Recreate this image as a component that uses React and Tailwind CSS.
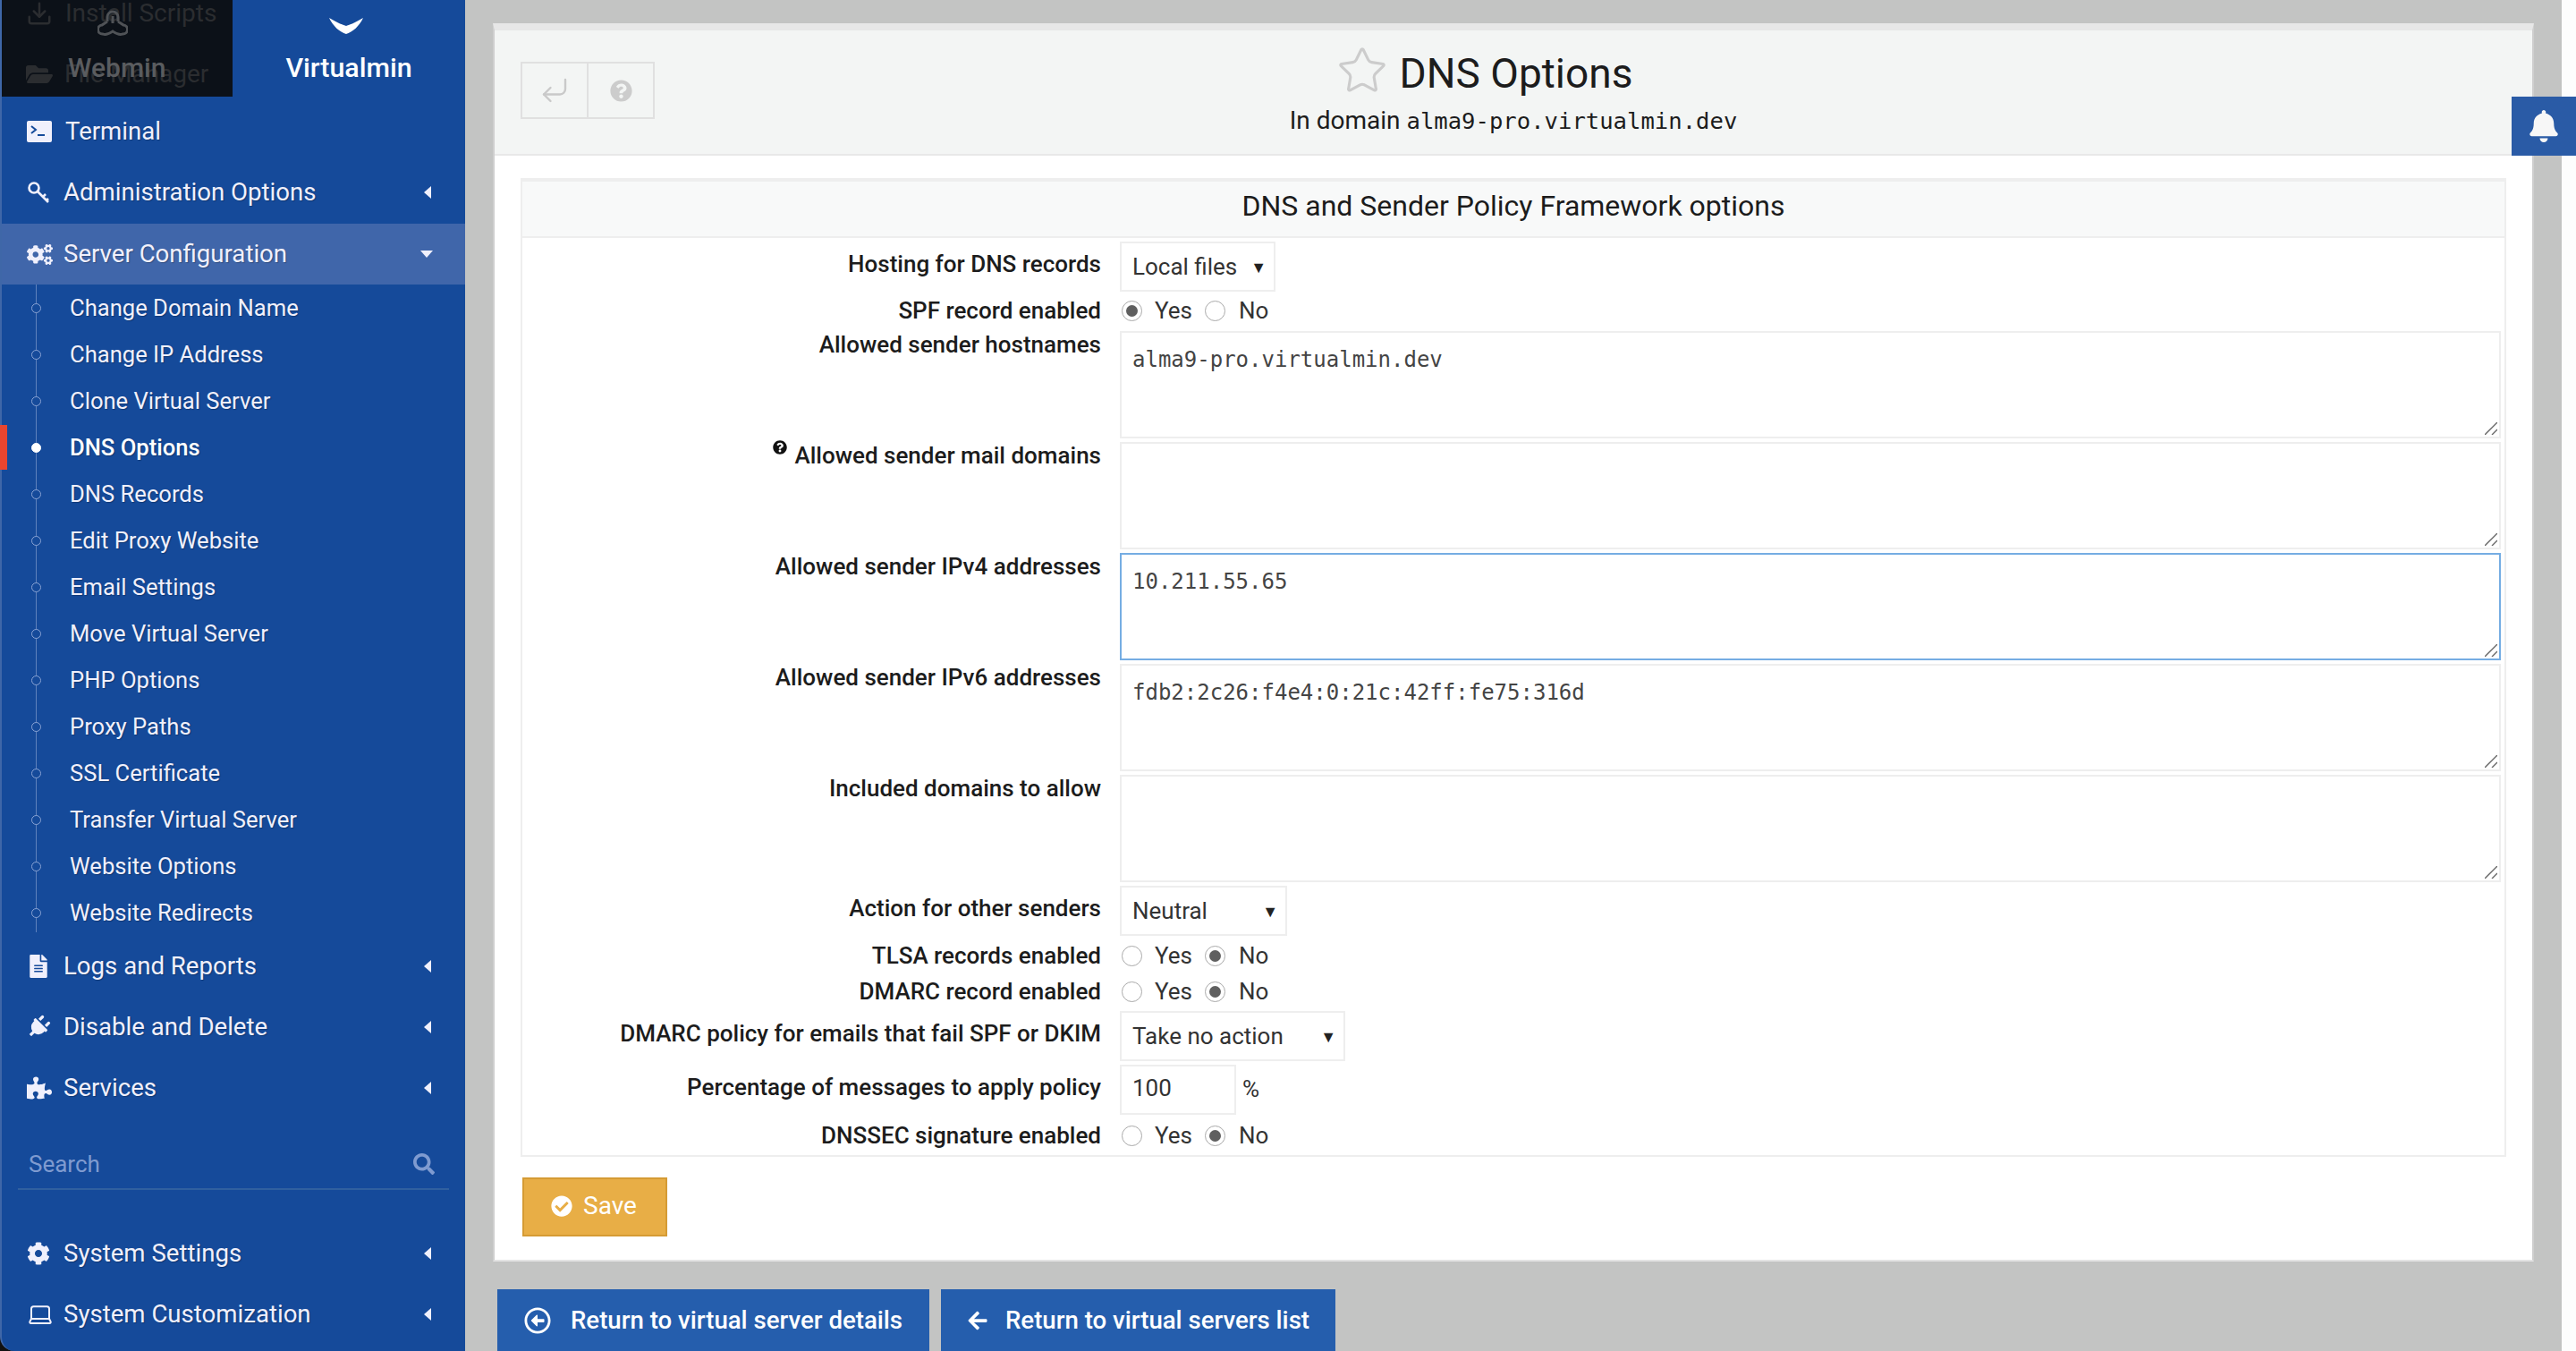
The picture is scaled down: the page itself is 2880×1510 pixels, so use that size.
import React from "react";
import {
  FaArrowLeft,
  FaBell,
  FaCheckCircle,
  FaCog,
  FaCogs,
  FaFileAlt,
  FaFolderOpen,
  FaPlug,
  FaPuzzlePiece,
  FaQuestionCircle,
  FaRegArrowAltCircleLeft,
  FaSearch,
} from "react-icons/fa";
import { CornerDownLeft, Download, Laptop, Star } from "lucide-react";

const subItems = [
  "Change Domain Name",
  "Change IP Address",
  "Clone Virtual Server",
  "DNS Options",
  "DNS Records",
  "Edit Proxy Website",
  "Email Settings",
  "Move Virtual Server",
  "PHP Options",
  "Proxy Paths",
  "SSL Certificate",
  "Transfer Virtual Server",
  "Website Options",
  "Website Redirects",
];

function TerminalIcon() {
  return (
    <svg viewBox="0 0 28 24" className="w-[28px] h-[24px]">
      <rect width="28" height="24" rx="2" fill="#f0f0fc" />
      <path d="M5 6l5 4-5 4" fill="none" stroke="#154a9a" strokeWidth="2" />
      <path d="M12 16h8" stroke="#154a9a" strokeWidth="2" />
    </svg>
  );
}

function KeyIcon() {
  return (
    <svg viewBox="0 0 26 26" className="w-[26px] h-[26px]" fill="none" stroke="#f0f0fc" strokeWidth="2.6">
      <circle cx="8" cy="8" r="5.5" />
      <path d="M12 12l12 12M18 18l3-3M22 22l2-2" />
    </svg>
  );
}

function CaretLeft() {
  return (
    <svg viewBox="0 0 8 14" className="w-[8px] h-[14px]">
      <path d="M8 0v14L0 7z" fill="#f0f0fc" />
    </svg>
  );
}

function CaretDown() {
  return (
    <svg viewBox="0 0 14 8" className="w-[14px] h-[8px]">
      <path d="M0 0h14L7 8z" fill="#f0f0fc" />
    </svg>
  );
}

function NavRow({ icon, label, active, open, noCaret, textClass = "" }) {
  return (
    <div className={`flex items-center h-[68px] pl-[28px] pr-[36px] ${active ? "bg-[#4066aa]" : ""}`}>
      <span className="w-[41px] flex items-center">{icon}</span>
      <span className={`flex-1 text-[27.6px] text-[#f0f0fc] [text-shadow:1px_1px_1px_rgba(0,0,0,0.25)] ${textClass}`}>
        {label}
      </span>
      {!noCaret && (open ? <CaretDown /> : <span className="mr-[2px] flex"><CaretLeft /></span>)}
    </div>
  );
}

function SubItem({ label, active }) {
  return (
    <div className="relative flex items-center h-[52px] pl-[76px]">
      {active && <span className="absolute left-[-2px] top-[1px] w-[8px] h-[50px] bg-[#e8452f]" />}
      <span
        className={`absolute left-[33px] w-[11px] h-[11px] rounded-full border-[1.5px] ${
          active ? "bg-white border-white" : "bg-[#154a9a] border-[#8aa3d4]"
        }`}
      />
      <span
        className={`text-[25.6px] text-[#f0f0fc] [text-shadow:1px_1px_1px_rgba(0,0,0,0.25)] ${
          active ? "font-medium text-white" : ""
        }`}
      >
        {label}
      </span>
    </div>
  );
}

function Sidebar() {
  return (
    <aside className="relative w-[520px] shrink-0 h-full bg-[#154a9a] border-l-2 border-[#3f67a8] rounded-bl-[16px]">
      {/* Tabs, with the scrolled menu showing through the dark one */}
      <div className="flex h-[108px]">
        <div className="relative w-[258px] bg-[#0c1118] overflow-hidden">
          <div className="absolute left-[27px] top-[-6px] flex items-center gap-[14px] text-[28px] text-[#2b2d30]">
            <Download size={30} />
            <span>Install Scripts</span>
          </div>
          <div className="absolute left-[27px] top-[62px] flex items-center gap-[13px] text-[28px] text-[#2b2d30]">
            <FaFolderOpen size={30} />
            <span>File Manager</span>
          </div>
          <svg viewBox="0 0 34 34" className="absolute left-[107px] top-[11px] w-[34px] h-[34px]" fill="none" stroke="#4f5256" strokeWidth="3">
            <path d="M11 13V8a6 6 0 0 1 12 0v5M11 13l-6 4a5 5 0 0 0 1 10c4 2 8-1 11-3 3 2 7 5 11 3a5 5 0 0 0 1-10l-6-4M17 7v8" />
          </svg>
          <div className="absolute left-[74px] top-[56px] text-[30px] font-medium text-[#5a5c5f] leading-[40px]">
            Webmin
          </div>
        </div>
        <div className="flex-1 flex flex-col items-center">
          <svg viewBox="0 0 38 18" className="mt-[20px] mr-[6px] w-[38px] h-[18px]">
            <path d="M0 0C10 6 16 8 19 9C22 8 28 6 38 0C34 9 26 16 19 18C12 16 4 9 0 0Z" fill="#ffffff" />
          </svg>
          <div className="mt-[18px] text-[30.4px] font-medium text-white leading-[40px]">Virtualmin</div>
        </div>
      </div>

      <div className="mt-[5px]">
        <NavRow icon={<TerminalIcon />} label="Terminal" textClass="ml-[2px]" noCaret />
      </div>
      <NavRow icon={<KeyIcon />} label="Administration Options" />
      <div className="mt-[1px]">
        <NavRow icon={<FaCogs size={29} color="#f0f0fc" />} label="Server Configuration" active open />
      </div>

      <div className="relative">
        <span className="absolute left-[38px] top-0 bottom-[4px] w-[1px] bg-[#5f82bd]" />
        {subItems.map((s) => (
          <SubItem key={s} label={s} active={s === "DNS Options"} />
        ))}
      </div>

      <div>
        <NavRow icon={<FaFileAlt size={26} color="#f0f0fc" />} label="Logs and Reports" />
        <NavRow icon={<FaPlug size={26} color="#f0f0fc" className="rotate-45" />} label="Disable and Delete" />
        <NavRow icon={<FaPuzzlePiece size={28} color="#f0f0fc" />} label="Services" />
      </div>

      <div className="mx-[18px] h-[80px] flex items-end justify-between pl-[12px] pr-[16px] pb-[7px] border-b-2 border-[#30609f]">
        <span className="text-[26px] text-[#7f9bd0]">Search</span>
        <FaSearch size={24} color="#7f9bd0" className="mb-[8px]" />
      </div>

      <div className="mt-[37px]">
        <NavRow icon={<FaCog size={26} color="#f0f0fc" />} label="System Settings" />
        <NavRow icon={<Laptop size={30} color="#f0f0fc" strokeWidth={1.6} />} label="System Customization" />
      </div>
    </aside>
  );
}

function Select({ label, className }) {
  return (
    <div className={`flex items-center justify-between h-[56px] border-2 border-[#eeeeee] bg-white pl-[12px] pr-[8px] text-[26px] text-[#333] ${className}`}>
      <span>{label}</span>
      <span className="text-[18px] text-[#222]">▼</span>
    </div>
  );
}

function Radio({ checked }) {
  return (
    <span className="flex items-center justify-center w-[23px] h-[23px] rounded-full border border-[#a9a9a9] bg-white">
      {checked && <span className="w-[13px] h-[13px] rounded-full bg-[#5f5f5f]" />}
    </span>
  );
}

function YesNo({ yes }) {
  return (
    <div className="flex items-center h-[30px] pl-[2px] text-[26px] text-[#333]">
      <Radio checked={yes} />
      <span className="ml-[14px] w-[56px]">Yes</span>
      <Radio checked={!yes} />
      <span className="ml-[15px]">No</span>
    </div>
  );
}

function Row({ label, help, className, labelClass = "", children }) {
  return (
    <div className={`flex ${className}`}>
      <div className={`w-[647px] shrink-0 flex justify-end text-right text-[26px] font-medium text-[#1c1c1c] leading-[30px] ${labelClass}`}>
        {help && <FaQuestionCircle size={16} color="#111" className="mr-[8px] mt-[-2px]" />}
        <span>{label}</span>
      </div>
      <div className={`ml-[21px] flex-1 ${labelClass.replace("pt-[10px]", "")}`}>{children}</div>
    </div>
  );
}

function Area({ value, focused }) {
  return (
    <div className="relative">
      <textarea
        defaultValue={value}
        spellCheck={false}
        className={`block w-full h-[120px] resize-none border-2 bg-white px-[12px] pt-[15px] font-['DejaVu_Sans_Mono',monospace] text-[24px] leading-[30px] text-[#444] outline-none ${
          focused ? "border-[#75ade3]" : "border-[#eeeeee]"
        }`}
      />
      {/* resize grip */}
      <svg viewBox="0 0 14 14" className="absolute right-[4px] bottom-[4px] w-[14px] h-[14px]" stroke="#666" strokeWidth="1.4">
        <path d="M0 14L14 0M8 14l6-6" />
      </svg>
    </div>
  );
}

function Panel() {
  return (
    <div className="h-[1384px] bg-white border-x-2 border-t-[8px] border-b-2 border-x-[#cfcfcf] border-t-[#e7e7e7] border-b-[#e4e4e4]">
      {/* Page header */}
      <div className="h-[140px] bg-[#f3f5f4] border-b-2 border-[#e8e8e8] grid grid-cols-[1fr_auto_1fr]">
        <div className="pl-[29px] pt-[35px]">
          <div className="flex w-[150px] h-[64px] border-2 border-[#e0e0e0]">
            <div className="flex-1 flex items-center justify-center border-r-2 border-[#e0e0e0]">
              <CornerDownLeft size={36} color="#c9c9c9" strokeWidth={1.6} />
            </div>
            <div className="flex-1 flex items-center justify-center">
              <FaQuestionCircle size={25} color="#cccccc" />
            </div>
          </div>
        </div>
        <div className="pt-[18px] text-center">
          <h1 className="relative inline-block ml-[6px] text-[46px] leading-[60px] text-[#1c1c1c]">
            <Star size={58} color="#cccccc" strokeWidth={1.3} className="absolute left-[-71px] top-[-2px]" />
            DNS Options
          </h1>
          <div className="mt-[5px] text-[28px] leading-[36px] text-[#1c1c1c]">
            In domain{" "}
            <span className="font-['DejaVu_Sans_Mono',monospace] text-[25.6px]">alma9-pro.virtualmin.dev</span>
          </div>
        </div>
        <div />
      </div>

      <div className="px-[29px] pt-[25px]">
        {/* Form table */}
        <div className="border-x-2 border-b-2 border-t-[4px] border-[#eeeeee]">
          <div className="h-[63px] pb-[8px] bg-[#f8f9f9] border-b-2 border-[#eeeeee] flex items-center justify-center text-[32px] text-[#1c1c1c]">
            DNS and Sender Policy Framework options
          </div>
          <div className="pt-[4px] pr-[4px]">
            <Row label="Hosting for DNS records" className="mb-[4px]" labelClass="pt-[10px]">
              <Select label="Local files" className="w-[174px]" />
            </Row>
            <Row label="SPF record enabled" className="h-[36px]" labelClass="pt-[2px]">
              <YesNo yes />
            </Row>
            <Row label="Allowed sender hostnames" className="mt-[4px] mb-[4px]">
              <Area value="alma9-pro.virtualmin.dev" />
            </Row>
            <Row label="Allowed sender mail domains" help className="mb-[4px]">
              <Area value="" />
            </Row>
            <Row label="Allowed sender IPv4 addresses" className="mb-[4px]">
              <Area value="10.211.55.65" focused />
            </Row>
            <Row label="Allowed sender IPv6 addresses" className="mb-[4px]">
              <Area value="fdb2:2c26:f4e4:0:21c:42ff:fe75:316d" />
            </Row>
            <Row label="Included domains to allow" className="mb-[4px]">
              <Area value="" />
            </Row>
            <Row label="Action for other senders" className="mb-[3px]" labelClass="pt-[10px]">
              <Select label="Neutral" className="w-[187px]" />
            </Row>
            <Row label="TLSA records enabled" className="h-[40px]" labelClass="pt-[4px]">
              <YesNo />
            </Row>
            <Row label="DMARC record enabled" className="h-[41px]" labelClass="pt-[4px]">
              <YesNo />
            </Row>
            <Row label="DMARC policy for emails that fail SPF or DKIM" className="mb-[4px]" labelClass="pt-[10px]">
              <Select label="Take no action" className="w-[252px]" />
            </Row>
            <Row label="Percentage of messages to apply policy" className="mb-[4px]" labelClass="pt-[10px]">
              <div className="flex items-center">
                <div className="flex items-center w-[130px] h-[56px] border-2 border-[#eeeeee] pl-[12px] pb-[4px] text-[26px] text-[#333]">100</div>
                <span className="ml-[7px] mb-[2px] text-[26px] text-[#333]">%</span>
              </div>
            </Row>
            <Row label="DNSSEC signature enabled" className="h-[41px]" labelClass="pt-[4px]">
              <YesNo />
            </Row>
          </div>
        </div>

        <button className="mt-[23px] ml-[2px] flex items-center w-[162px] h-[66px] pl-[30px] pb-[2px] bg-[#e8ae46] border-2 border-[#d59b34] text-[28px] text-white">
          <FaCheckCircle size={24} color="#ffffff" className="mr-[12px]" />
          Save
        </button>
      </div>
    </div>
  );
}

function App() {
  return (
    <div className="relative flex w-[2880px] h-[1510px] overflow-hidden bg-[#111111] font-['Roboto',sans-serif]">
      <Sidebar />
      <main className="flex-1 h-full bg-[#c3c4c3] pt-[26px] pl-[31px] pr-[31px]">
        <Panel />
        <div className="mt-[31px] ml-[5px] flex gap-[13px]">
          <button className="flex items-center w-[483px] h-[69px] pl-[30px] bg-[#255ead] text-[27.6px] font-medium text-white">
            <FaRegArrowAltCircleLeft size={30} className="mr-[22px]" />
            Return to virtual server details
          </button>
          <button className="flex items-center w-[441px] h-[69px] pl-[29px] bg-[#255ead] text-[27.6px] font-medium text-white">
            <FaArrowLeft size={24} className="mr-[19px]" />
            Return to virtual servers list
          </button>
        </div>
      </main>
      <div className="w-[16px] shrink-0 h-full bg-[#fdfdfd]" />

      {/* Notifications button */}
      <div className="absolute right-0 top-[108px] w-[72px] h-[66px] bg-[#2a5ba6] flex items-center justify-center">
        <FaBell size={36} color="#f7f7f7" />
      </div>
    </div>
  );
}

export default App;
